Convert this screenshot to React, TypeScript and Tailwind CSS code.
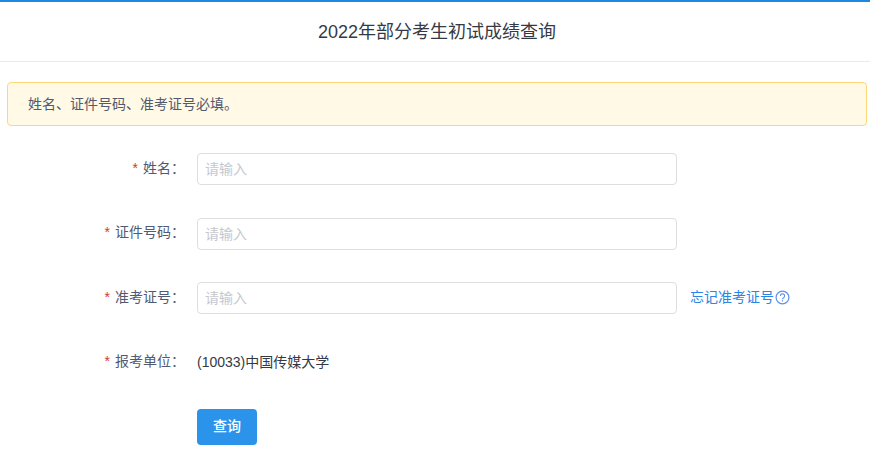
import React from "react"

const fields = [
  { label: "姓名", top: "mt-[27px]", nudge: "-mt-0.5" },
  { label: "证件号码", top: "mt-[33px]", nudge: "-mt-1" },
  { label: "准考证号", top: "mt-[32px]", nudge: "-mt-0.5", forgot: true },
]

function Label({ text, nudge = "-mt-0.5" }: { text: string; nudge?: string }) {
  return (
    <div className={`${nudge} w-[185px] shrink-0 text-right text-sm text-[#515a6e]`}>
      <span className="mr-[5px] text-sm text-[#d9341a]">*</span>
      {text}：
    </div>
  )
}

export default function App() {
  return (
    <div className="h-[469px] w-[870px] overflow-hidden border-t-2 border-[#1e88e0] bg-white font-['Liberation_Sans','Noto_Sans_CJK_SC',sans-serif] text-[#515a6e]">
      <div className="flex h-[60px] items-center justify-center border-b border-[#e8eaec] pl-1 text-lg text-[#333a45]">
        2022年部分考生初试成绩查询
      </div>

      <div className="ml-[7px] mr-[3px] mt-5 flex h-11 items-center rounded border border-[#ffd77a] bg-[#fff9e6] px-5 text-sm">
        姓名、证件号码、准考证号必填。
      </div>

      {fields.map((f) => (
        <div key={f.label} className={`flex items-center ${f.top}`}>
          <Label text={f.label} nudge={f.nudge} />
          <input
            placeholder="请输入"
            className="ml-3 h-8 w-[480px] rounded border border-[#dcdee2] pl-[7px] pr-2 text-sm placeholder:text-[#c5c8ce]"
          />
          {f.forgot && (
            <a className="-mt-0.5 ml-[14px] flex items-center text-sm text-[#2b85e4]">
              <span className="-ml-px">忘记准考证号</span>
              <svg className="ml-px" width="15" height="15" viewBox="0 0 15 15" fill="none" stroke="#5f90e6" strokeWidth="1.2">
                <circle cx="7.5" cy="7.5" r="6.4" />
                <path d="M5.4 5.9a2.1 2.1 0 1 1 3.2 1.8c-.8.4-1.1.9-1.1 1.6" />
                <path d="M7.5 10.2v1.3" />
              </svg>
            </a>
          )}
        </div>
      ))}

      <div className="mt-[38px] flex items-center">
        <Label text="报考单位" />
        <div className="ml-3 text-sm text-[#333a45]">(10033)中国传媒大学</div>
      </div>

      <button className="ml-[197px] mt-[37px] h-9 w-[60px] rounded bg-[#2b94ea] pb-0.5 text-sm font-medium text-white">
        查询
      </button>
    </div>
  )
}
